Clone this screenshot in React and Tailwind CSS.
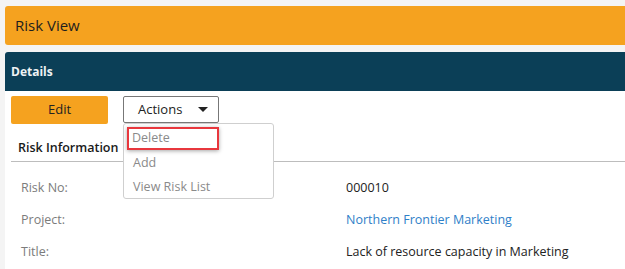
export default function App() {
  const font = { fontFamily: '"Open Sans", "Noto Sans", sans-serif' };
  return (
    <div className="w-[625px] h-[269px] overflow-hidden bg-[#f4f4f4] pl-[5px] pt-[6px]" style={font}>
      <div className="h-[39px] bg-[#f5a21f] rounded-l-[3px] flex items-center pl-[10px] text-[15px] text-[#1e1e1e] mb-[7px]">
        Risk View
      </div>
      <div className="bg-white rounded-tl-[3px]">
        <div className="h-[39px] bg-[#0b3f57] rounded-tl-[3px] flex items-center pl-[6px] text-[12px] font-bold text-[#eef2f4]">
          Details
        </div>
        <div className="pt-[5px] pl-[6px] h-[200px]">
          <div className="flex items-start gap-[15px]">
            <button className="w-[97px] h-[28px] bg-[#f5a21f] rounded-[2px] text-[13px] text-[#222] flex items-center justify-center">
              Edit
            </button>
            <div className="relative">
              <button className="w-[96px] h-[27px] bg-white border border-[#777] rounded-[2px] text-[13px] text-[#222] flex items-center pl-[14px]">
                <span>Actions</span>
                <svg width="10" height="5" viewBox="0 0 10 5" className="ml-[16px]">
                  <path d="M0 0 L10 0 L5 5 Z" fill="#222" />
                </svg>
              </button>
              <div className="absolute left-0 top-[27px] w-[151px] h-[76px] bg-white border border-[#cfcfcf] rounded-[3px] z-10 text-[12.5px] text-[#8a8a8a] pt-[3px] pl-[3px]">
                <div className="w-[92px] h-[23px] border-2 border-[#e8373d] shadow-[0_1px_4px_rgba(0,0,0,0.35)] flex items-center pl-[3px]">
                  Delete
                </div>
                <div className="h-[24px] flex items-center pl-[6px] pt-[2px]">Add</div>
                <div className="h-[24px] flex items-center pl-[6px] pt-[3px]">View Risk List</div>
              </div>
            </div>
          </div>
          <div className="mt-[11px] border-b border-[#bdbdbd] h-[27px] flex items-center pl-[7px] text-[12.5px] font-semibold text-[#1a1a1a]">
            Risk Information
          </div>
          <div className="pl-[10px] text-[12.5px]">
            <div className="flex items-center h-[32px] mt-[10px]">
              <span className="w-[325px] text-[#7c7c7c]">Risk No:</span>
              <span className="text-[#222]">000010</span>
            </div>
            <div className="flex items-center h-[32px]">
              <span className="w-[325px] text-[#7c7c7c]">Project:</span>
              <span className="text-[#2f80c8]">Northern Frontier Marketing</span>
            </div>
            <div className="flex items-center h-[32px]">
              <span className="w-[325px] text-[#7c7c7c]">Title:</span>
              <span className="text-[#222]">Lack of resource capacity in Marketing</span>
            </div>
          </div>
        </div>
      </div>
    </div>
  );
}
